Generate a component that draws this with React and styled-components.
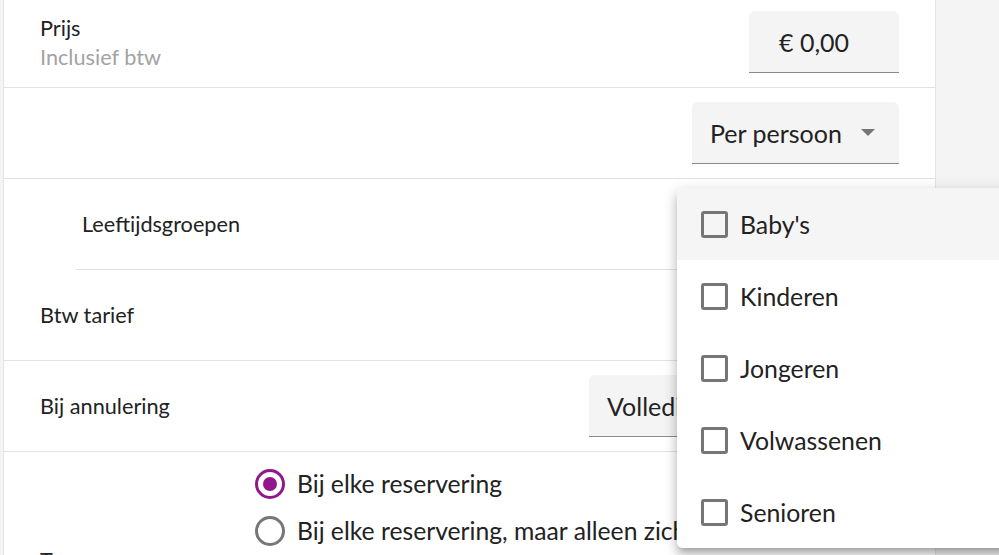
import React from 'react'
import styled, { createGlobalStyle } from 'styled-components'

const GlobalStyle = createGlobalStyle`
    body {
        margin: 0;
        background-color: #f4f4f4;
        font-family: 'Lato', 'Noto Sans', sans-serif;
        color: #222222;
        overflow: hidden;
    }
`

const Page = styled.div`
    position: relative;
    height: 555px;
    overflow: hidden;
`

const Panel = styled.div`
    width: 931px;
    margin-left: 3px;
    margin-top: -3px;
    background-color: #ffffff;
    border-left: 1px solid #e4e4e4;
    border-right: 1px solid #e4e4e4;
    min-height: 700px;
`

const Row = styled.div`
    display: flex;
    align-items: center;
    justify-content: space-between;
    height: 90px;
    padding: 0 36px;
    border-bottom: 1px solid #e2e2e2;
`

const InsetRow = styled(Row)`
    margin-left: 72px;
    padding-left: 6px;
`

const LabelBlock = styled.div`
    display: flex;
    flex-direction: column;
    gap: 3px;
`

const Label = styled.div`
    font-size: 21.7px;
    line-height: 26px;
    color: #222222;
`

const Hint = styled.div`
    font-size: 21.7px;
    line-height: 26px;
    color: #a3a3a3;
`

const Field = styled.div`
    display: flex;
    align-items: center;
    justify-content: space-between;
    box-sizing: border-box;
    width: ${props => props.width}px;
    height: 62px;
    padding: 0 24px 0 ${props => props.pad || 18}px;
    background-color: #f4f4f4;
    border-radius: 6px 6px 0 0;
    border-bottom: 1px solid #8a8a8a;
    font-size: 25px;
    color: #222222;
    white-space: nowrap;
    overflow: hidden;
`

const Caret = styled.span`
    flex-shrink: 0;
    width: 0;
    height: 0;
    border-left: 7px solid transparent;
    border-right: 7px solid transparent;
    border-top: 7px solid #757575;
    margin-left: auto;
`

const RadioRow = styled.div`
    display: flex;
    align-items: center;
    padding: 8px 36px;
    border-bottom: 1px solid #e2e2e2;
`

const RadioLabel = styled(Label)`
    width: 215px;
    flex-shrink: 0;
    padding-top: 12px;
`

const RadioGroup = styled.div`
    display: flex;
    flex-direction: column;
`

const Option = styled.div`
    display: flex;
    align-items: center;
    height: 47px;
    gap: 12px;
    font-size: 24.7px;
    white-space: nowrap;
`

const RadioRing = styled.span`
    box-sizing: border-box;
    flex-shrink: 0;
    width: 30px;
    height: 30px;
    border-radius: 50%;
    border: 3px solid ${props => props.checked ? '#90178c' : '#767676'};
    display: flex;
    align-items: center;
    justify-content: center;
    &::after {
        content: '';
        display: ${props => props.checked ? 'block' : 'none'};
        width: 14px;
        height: 14px;
        border-radius: 50%;
        background-color: #90178c;
    }
`

const Menu = styled.div`
    position: absolute;
    left: 677px;
    top: 188px;
    width: 340px;
    background-color: #ffffff;
    border-radius: 6px;
    box-shadow: 0 5px 5px -3px rgba(0, 0, 0, 0.2), 0 8px 10px 1px rgba(0, 0, 0, 0.14), 0 3px 14px 2px rgba(0, 0, 0, 0.12);
    overflow: hidden;
`

const MenuItem = styled.div`
    display: flex;
    align-items: center;
    height: 72px;
    padding-left: 24px;
    gap: 12px;
    font-size: 24.8px;
    background-color: ${props => props.active ? '#f5f5f5' : '#ffffff'};
`

const Box = styled.span`
    box-sizing: border-box;
    flex-shrink: 0;
    width: 27px;
    height: 27px;
    border: 3px solid #767676;
    border-radius: 3px;
`

const groups = ["Baby's", 'Kinderen', 'Jongeren', 'Volwassenen', 'Senioren']

const options = [
    'Bij elke reservering',
    'Bij elke reservering, maar alleen zichtbaar voor beheerders',
    'Alleen bij de eerste reservering',
    'Nooit',
]

function App() {
    return (
        <Page>
            <GlobalStyle />
            <Panel>
                <Row>
                    <LabelBlock>
                        <Label>Prijs</Label>
                        <Hint>Inclusief btw</Hint>
                    </LabelBlock>
                    <Field width={150} pad={30}>€ 0,00</Field>
                </Row>
                <Row>
                    <span />
                    <Field width={207}>Per persoon<Caret /></Field>
                </Row>
                <InsetRow>
                    <Label>Leeftijdsgroepen</Label>
                    <Field width={207}><Caret /></Field>
                </InsetRow>
                <Row>
                    <Label>Btw tarief</Label>
                    <Field width={207}><Caret /></Field>
                </Row>
                <Row>
                    <Label>Bij annulering</Label>
                    <Field width={310}>Volledig terugbetalen<Caret /></Field>
                </Row>
                <RadioRow>
                    <RadioLabel>Tonen</RadioLabel>
                    <RadioGroup>
                        {options.map((text, i) => (
                            <Option key={text}>
                                <RadioRing checked={i === 0} />
                                {text}
                            </Option>
                        ))}
                    </RadioGroup>
                </RadioRow>
            </Panel>
            <Menu>
                {groups.map((name, i) => (
                    <MenuItem key={name} active={i === 0}>
                        <Box />
                        {name}
                    </MenuItem>
                ))}
            </Menu>
        </Page>
    )
}

export default App
